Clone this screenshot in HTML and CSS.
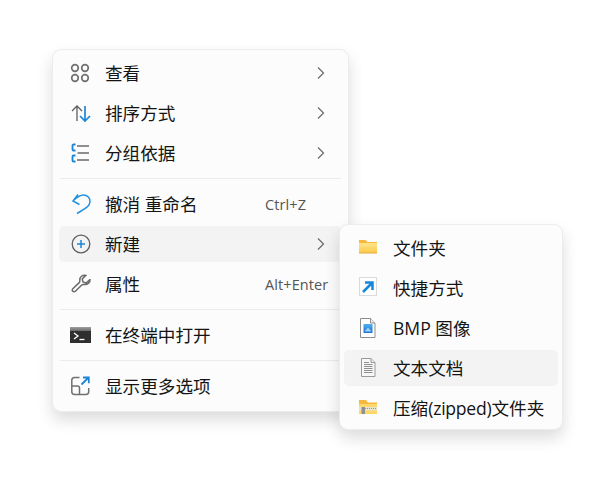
FILE: index.html
```
<!DOCTYPE html>
<html lang="zh-CN">
<head>
<meta charset="utf-8">
<title>右键菜单</title>
<link rel="stylesheet" href="styles.css">
</head>
<body>
<div class="stage">
  <div class="menu main">
    <div class="group">
      <div class="row">
        <svg class="ic" viewBox="0 0 20 20"><g fill="none" stroke="#707070" stroke-width="1.700"><circle cx="4" cy="5" r="3.300"/><circle cx="14" cy="5" r="3.300"/><circle cx="4" cy="15" r="3.300"/><circle cx="14" cy="15" r="3.300"/></g></svg>
        <span class="label">查看</span>
        <svg class="chev" viewBox="0 0 8 14"><path d="M1 1.500 6.500 7 1 12.500" fill="none" stroke="#6a6a6a" stroke-width="1.200"/></svg>
      </div>
      <div class="row">
        <svg class="ic" viewBox="0 0 20 20"><path d="M6 18V3M1 8l5-5 5 5" fill="none" stroke="#5f5f5f" stroke-width="1.300"/><path d="M14 3v15M9 13l5 5 5-5" fill="none" stroke="#1b86d6" stroke-width="1.700"/></svg>
        <span class="label">排序方式</span>
        <svg class="chev" viewBox="0 0 8 14"><path d="M1 1.500 6.500 7 1 12.500" fill="none" stroke="#6a6a6a" stroke-width="1.200"/></svg>
      </div>
      <div class="row">
        <svg class="ic" viewBox="0 0 20 20"><path d="M6 17H18M6.500 10H18M6 3H18" fill="none" stroke="#6a6a6a" stroke-width="1.600"/><path d="M4.500 1.500H2.500A1 1 0 0 0 1.500 2.500V6.500A1 1 0 0 0 2.500 7.500H4.500M4.500 12.500H2.500A1 1 0 0 0 1.500 13.500V17.500A1 1 0 0 0 2.500 18.500H4.500" fill="none" stroke="#1b86d6" stroke-width="1.800"/></svg>
        <span class="label">分组依据</span>
        <svg class="chev" viewBox="0 0 8 14"><path d="M1 1.500 6.500 7 1 12.500" fill="none" stroke="#6a6a6a" stroke-width="1.200"/></svg>
      </div>
    </div>
    <div class="sep"></div>
    <div class="group">
      <div class="row">
        <svg class="ic" viewBox="0 0 20 20"><path d="M7 .5 2 7l6.500 3.500M2 7C7 2 12 .5 15 1.500c4 1.500 5 5.500 3 9.500-2 3-8 6-12 8.500" fill="none" stroke="#2391e0" stroke-width="1.500"/></svg>
        <span class="label">撤消 重命名</span>
        <span class="key">Ctrl+Z</span>
      </div>
      <div class="row on">
        <svg class="ic" viewBox="0 0 20 20"><circle cx="10" cy="10" r="8.800" fill="none" stroke="#5f5f5f" stroke-width="1.300"/><path d="M10 6v8M6 10h8" fill="none" stroke="#1b86d6" stroke-width="1.500"/></svg>
        <span class="label">新建</span>
        <svg class="chev" viewBox="0 0 8 14"><path d="M1 1.500 6.500 7 1 12.500" fill="none" stroke="#6a6a6a" stroke-width="1.200"/></svg>
      </div>
      <div class="row">
        <svg class="ic" viewBox="0 0 20 20"><path d="M19 5.500l-4 3.500-3-1-.8-3 3.600-3.600C11.500.8 8.500 2.600 8.800 6.300c.1 1 .2 1.500-.6 2.300L1.800 14.800c-1.700 1.700.8 4.200 2.500 2.500l6.500-6.300c.7-.7 1.300-.6 2.200-.5 3.700.4 6.400-2.300 6-5.500z" fill="none" stroke="#6a6a6a" stroke-width="1.500"/></svg>
        <span class="label">属性</span>
        <span class="key">Alt+Enter</span>
      </div>
    </div>
    <div class="sep"></div>
    <div class="group">
      <div class="row">
        <svg class="ic" viewBox="0 0 20 20"><defs><linearGradient id="bar" x1="0" y1="0" x2="0" y2="1"><stop offset="0" stop-color="#a0a0a0"/><stop offset="1" stop-color="#6a6a6a"/></linearGradient></defs><rect x="-1" y="2" width="21" height="16" fill="#2f2f2f"/><rect x="-1" y="2" width="21" height="4" fill="url(#bar)"/><path d="M3 8 7 11 3 14" fill="none" stroke="#fff" stroke-width="1.300"/><path d="M8.500 14.500h5" stroke="#fff" stroke-width="1.300"/></svg>
        <span class="label">在终端中打开</span>
      </div>
    </div>
    <div class="sep"></div>
    <div class="group">
      <div class="row">
        <svg class="ic" viewBox="0 0 20 20"><path d="M8.500 1.500H3.500A2.800 2.800 0 0 0 .8 4.300V15.700a2.800 2.800 0 0 0 2.700 2.800h11.500a2.800 2.800 0 0 0 2.700-2.800v-3.700M.8 10h5.700a2 2 0 0 1 2 2v6.500" fill="none" stroke="#707070" stroke-width="1.500"/><path d="M10.500 8.500 17 2M12 1.500h5.800v5.800" fill="none" stroke="#1b86d6" stroke-width="1.800"/></svg>
        <span class="label">显示更多选项</span>
      </div>
    </div>
  </div>

  <div class="menu sub">
    <div class="group">
      <div class="row">
        <svg class="ic" viewBox="0 0 20 20"><defs><linearGradient id="fold" x1="0" y1="0" x2="0" y2="1"><stop offset="0" stop-color="#ffe58a"/><stop offset="1" stop-color="#fbc84a"/></linearGradient></defs><path d="M1 2h6.500l2 2H19v3H1z" fill="#f5b83a"/><rect x="1" y="5" width="18" height="10" fill="url(#fold)"/><rect x="1" y="14.500" width="18" height="1" fill="#eaaa38"/></svg>
        <span class="label">文件夹</span>
      </div>
      <div class="row">
        <svg class="ic" viewBox="0 0 20 20"><rect x="1.500" y="-.5" width="17" height="18" fill="#fff" stroke="#dadada"/><path d="M5 14 14 5M7 4.500h7.500V12" fill="none" stroke="#1588d9" stroke-width="2.500"/></svg>
        <span class="label">快捷方式</span>
      </div>
      <div class="row">
        <svg class="ic" viewBox="0 0 20 20"><defs><linearGradient id="pic" x1="0" y1="0" x2="0" y2="1"><stop offset="0" stop-color="#4fb0f0"/><stop offset="1" stop-color="#1a6fd0"/></linearGradient></defs><path d="M2.500 .5h10l4.500 4.500v14.500h-14.500z" fill="#fff" stroke="#8f8f8f"/><path d="M12.500 .5v4.500h4.500" fill="#eee" stroke="#8f8f8f"/><rect x="5.500" y="6" width="9" height="9" fill="url(#pic)"/><path d="M6.500 13.500 10 9.500l3.500 4z" fill="#9fd4f7"/></svg>
        <span class="label">BMP 图像</span>
      </div>
      <div class="row on">
        <svg class="ic" viewBox="0 0 20 20"><path d="M3.500 .5h9.500l4 4v14h-13.500z" fill="#f7f7f7" stroke="#9a9a9a"/><path d="M13 .5v4h4" fill="#e6e6e6" stroke="#9a9a9a"/><path d="M6 4.500h5M6 6.500h8.500M6 8.500h8.500M6 10.500h8.500M6 12.500h8.500M6 14.500h8.500" stroke="#8e8e8e"/></svg>
        <span class="label">文本文档</span>
      </div>
      <div class="row">
        <svg class="ic" viewBox="0 0 20 20"><path d="M1 2h7l2 2.500h9V8H1z" fill="#f5b83a"/><rect x="1" y="6" width="18" height="10" fill="#fdd869"/><rect x="1" y="9" width="18" height="3.500" fill="#e6e3cf"/><path d="M7 10.500h12" stroke="#9a9a8c" stroke-dasharray="1 1"/><rect x="3.500" y="9" width="3.500" height="7" fill="#8f8f8f"/></svg>
        <span class="label">压缩<span class="tight">(zipped)</span>文件夹</span>
      </div>
    </div>
  </div>
</div>
</body>
</html>
```
FILE: styles.css
```
* { box-sizing: border-box; }
html, body { margin: 0; height: 100%; background: #fff; }
body {
  font-family: "Open Sans", "Noto Sans CJK SC", sans-serif;
  color: #141414;
  overflow: hidden;
}
.stage { position: relative; width: 611px; height: 477px; padding: 49px 0 0 52px; }
.menu {
  background: #fcfcfc;
  border: 1px solid #ececec;
  border-radius: 9px;
  box-shadow: 0 8px 16px rgba(0, 0, 0, .14);
}
.main { width: 297px; height: 363px; padding: 5px 7px 6px 6px; }
.sub { position: absolute; left: 339px; top: 224px; width: 224px; height: 206px; padding: 5px 4px; }
.group { display: flex; flex-direction: column; gap: 4px; }
.row {
  display: flex;
  align-items: center;
  height: 36px;
  padding-left: 12px;
  padding-right: 16px;
  border-radius: 5px;
}
.sub .row { padding-left: 14px; padding-right: 13px; }
.row.on { background: #f3f3f3; }
.ic { width: 20px; height: 20px; flex: none; margin-right: 14px; overflow: visible; }
.sub .ic { margin-right: 15px; }
.label { flex: 1; font-size: 17.600px; line-height: 24px; white-space: nowrap; }
.tight { letter-spacing: -.25px; }
.key {
  width: 63px;
  margin-right: -3px;
  font-size: 14.500px;
  letter-spacing: .1px;
  color: #555;
  white-space: nowrap;
}
.chev { width: 8px; height: 14px; flex: none; }
.sep { height: 1px; margin: 7px 0 7px 1px; background: #ebebeb; }
```
